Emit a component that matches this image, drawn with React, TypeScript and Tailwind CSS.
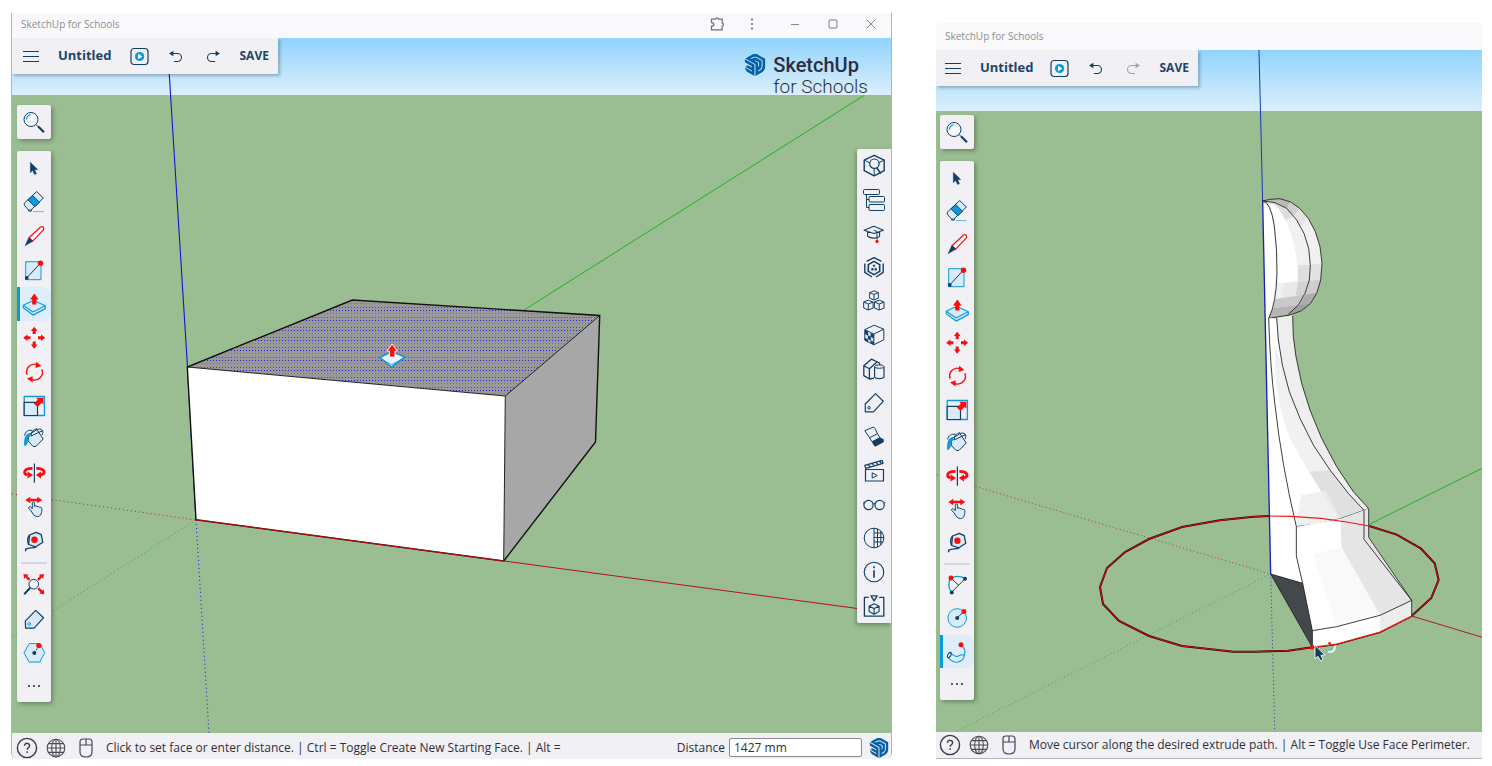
import type { ReactNode } from "react";
import clsx from "clsx";
import { SiSketchup } from "react-icons/si";

const NAVY = "#123f66";
const BLUE = "#0a9bdc";
const PALE = "#d9ebf9";
const RED = "#fb0d0d";

interface Tool {
    name: string;
    icon: ReactNode;
    active?: boolean;
}

function Icon({ children, size = 24 }: { children: ReactNode; size?: number }) {
    return (
        <svg
            width={size}
            height={size}
            viewBox="0 0 24 24"
            fill="none"
            stroke={NAVY}
            strokeWidth={1}
            strokeLinejoin="round"
            aria-hidden="true"
            className="shrink-0"
        >
            {children}
        </svg>
    );
}

/* ---------- drawing tools (left palette) ---------- */

const searchIcon = (
    <Icon>
        <circle cx="9" cy="9.5" r="7" fill="#f4f8fc" />
        <path d="M4.5 9.5a4.6 4.6 0 0 1 4.2-4.6" stroke={BLUE} strokeWidth={1.4} />
        <path d="M14 14.5l2 2" />
        <path d="M16 16.2l6 6" strokeWidth={2.2} />
    </Icon>
);

const selectIcon = (
    <Icon>
        <path d="M8.3 6.3v10.4l2.4-2.1 1.8 4 2-.9-1.8-3.9 3.1-.2z" fill={NAVY} strokeWidth={0.4} />
    </Icon>
);

const eraserIcon = (
    <Icon>
        <path d="M14.7 1.5l6.6 6.6L8.7 20.2h-2l-4.4-5v-2z" fill={PALE} />
        <path d="M10.7 5.5l6.8 6.8-4.6 4.4L6 9.8z" fill={BLUE} />
        <path d="M6 20.5q2 1.5 4 0" />
        <path d="M11 21.6h10.7" stroke="#63bbe6" />
    </Icon>
);

const pencilIcon = (
    <Icon>
        <path d="M18.6 3q1.8-1 3 .8v1.800L10.6 17.2 7 13.8z" fill="#fff" stroke={RED} strokeWidth={1.2} />
        <path d="M6.800 13.600l4 3.600L3 21.800z" fill={NAVY} strokeWidth={0.4} />
    </Icon>
);

const rectIcon = (
    <Icon>
        <path d="M3.7 3.7H19v18H3.7z" fill={PALE} stroke={BLUE} />
        <path d="M4.7 20L18.3 5.3" />
        <circle cx="4.7" cy="20" r="1.9" fill={NAVY} stroke="none" />
        <circle cx="18.5" cy="5.2" r="2.7" fill={RED} stroke="none" />
    </Icon>
);

const pushPullIcon = (
    <Icon>
        <path d="M1.3 13.3v2.4l9.7 7.4 12.3-6.5v-2.9L14 9.5H9z" fill={PALE} stroke={BLUE} strokeWidth={1.2} />
        <path d="M1.3 13.3L11 20l12.3-6.3" stroke={BLUE} strokeWidth={1.1} />
        <path d="M12.3 1.5l4.3 6h-2.2v5h-4.2v-5H8z" fill={RED} stroke="none" />
    </Icon>
);

const moveIcon = (
    <Icon>
        {[0, 90, 180, 270].map((a) => (
            <path
                key={a}
                d="M12.2.8l3.3 4.2h-1.8v3h-3V5H8.9z"
                fill={RED}
                stroke="none"
                transform={`rotate(${a} 12.2 11.8)`}
            />
        ))}
    </Icon>
);

const rotateIcon = (
    <Icon>
        <path d="M5.2 14.8A7.8 7.8 0 0 1 15 4.6M19.8 9.2A7.8 7.8 0 0 1 10 19.6" stroke={RED} strokeWidth={1.4} />
        <path d="M14.2 1.8l5.2 4.2-5.8 2zM10.6 16.2v6.4L5 18.6z" fill={RED} stroke="none" />
    </Icon>
);

const scaleIcon = (
    <Icon>
        <path d="M2.2 2.5h20.2v19H2.2z" stroke={BLUE} strokeWidth={1.3} />
        <path d="M2.2 8.3h13.3v13.2H2.2z" fill={PALE} strokeWidth={1.2} />
        <path d="M21.4 3.8v6.4l-2-1.3-3.8 4-3.8-3.4 4-3.8-1.6-1.9z" fill={RED} stroke="none" />
    </Icon>
);

const paintIcon = (
    <Icon>
        <path d="M7 7.5L15 2.600l6.200 9.400-7.200 7.400h-3L6 14z" fill={PALE} />
        <path d="M9 9l12-5.500M9.500 8.500c-.5-3.500 1.500-6 5.500-6.800M15 2.600c4-1.800 7.500 1 5 5.600" />
        <path d="M8.200 6C4 6.400 1.600 10 2.200 19c2.600-.2 3.400-2 3.600-4.800.2-2.300 1-4.200 3.200-5.400z" fill={BLUE} stroke="none" />
        <path d="M2.600 8.500C3.200 4.500 6.500 2.600 10.500 3.400" />
    </Icon>
);

const flipIcon = (
    <Icon>
        <path d="M10.5 7.3C5 7.2 2.5 9 2.6 11.2c0 1.5 1.2 2.4 3 2.8M14.3 7.3c5.5 0 8 1.8 7.8 3.9-.1 1.4-1.4 2.4-3.6 2.8" stroke={RED} strokeWidth={2.8} />
        <path d="M5.6 10.4l5.4 3.6-5.4 3.6zM19 10.4L13.8 14l5.2 3.6z" fill={RED} stroke="none" />
        <path d="M12.4 2.5v19.2" strokeWidth={1.2} />
    </Icon>
);

const handIcon = (
    <Icon>
        <path
            d="M9 15.8l-2.2-2.3c-.8-1.2.8-2.4 1.8-1.4l1.7 1.5V8.2c0-1.7 2.3-1.7 2.3 0v3.2c1-.9 2.2-.7 2.5.4 1-.7 2.1-.4 2.4.7 1.3-.6 2.4 0 2.4 1.6 0 3.2-.8 7.5-4.5 7.5-3 0-4.5-2.6-6.4-5.8z"
            fill={PALE}
        />
        <path d="M3.3 5l5-3.2v2h7v-2l5 3.2-5 3.200v-2h-7v2z" fill={RED} stroke="none" />
    </Icon>
);

const tapeIcon = (
    <Icon>
        <path d="M7.6 6l6.6-2.7 5 2.4 1.6 7.6-7 4.5-7.2-2.3z" fill={PALE} strokeWidth={1.3} />
        <path d="M14.2 17.8c-3 1.8-7 .4-10.4 2.3M3.6 19.8v2.400M6.6 15.4c-1.4-4-1-7.4 1-9.4" strokeWidth={1.4} />
        <circle cx="12.4" cy="10.8" r="3.2" fill={RED} stroke="none" />
    </Icon>
);

const extentsIcon = (
    <Icon>
        <circle cx="11.8" cy="11.2" r="4.8" fill="#f4f8fc" />
        <path d="M8.2 14.8l-6 6.4" strokeWidth={2} />
        <path d="M1.4 1l5.2.8-1.4 1.2L8.4 6 6.6 7.8 3.4 4.6 2.2 5.8zM22 1l-5.2.8L18 3l-3 3 1.8 1.8 3-3.2 1.4 1.2zM22.4 21.2l-5.2-.8 1.2-1.2-3-3 1.8-1.8 3 3.2 1.4-1.2z" fill={RED} stroke="none" />
    </Icon>
);

const tagIcon = (
    <Icon>
        <path d="M3.3 14.2L13.7 3.4l7.8 7.4L12 21.2H3.6z" fill={PALE} strokeWidth={1.2} />
        <circle cx="7.2" cy="17" r="1.4" stroke={BLUE} />
    </Icon>
);

const polygonIcon = (
    <Icon>
        <path d="M2 11.8l5.2-9.2h10.4l5.2 9.2-5.2 9.3H7.2z" fill={PALE} stroke={BLUE} />
        <path d="M12.3 12l4.5-7" strokeDasharray="2 1.4" />
        <circle cx="12.3" cy="12" r="2" fill={NAVY} stroke="none" />
        <circle cx="16.9" cy="4.6" r="2.7" fill={RED} stroke="none" />
    </Icon>
);

const moreIcon = (
    <Icon>
        <path d="M6 11h2v2H6zM11 11h2v2h-2zM16 11h2v2h-2z" fill={NAVY} fillOpacity={0.8} stroke="none" />
    </Icon>
);

const arcIcon = (
    <Icon>
        <path d="M6 5.2c4-2.4 9-2.6 14 .4M6 5.2C3 9 2.8 14.6 6.6 19.2" stroke={BLUE} strokeWidth={1.3} />
        <path d="M6.6 19.2L20 5.8M6 5.2l8 7.4" />
        <circle cx="6.8" cy="19.4" r="2" fill={NAVY} stroke="none" />
        <circle cx="20" cy="5.7" r="2" fill={NAVY} stroke="none" />
        <circle cx="6" cy="5" r="2.5" fill={RED} stroke="none" />
    </Icon>
);

const circleIcon = (
    <Icon>
        <circle cx="12.2" cy="12" r="9.3" fill={PALE} stroke={BLUE} />
        <path d="M12.2 12l6.8-6.7" />
        <circle cx="12.2" cy="12" r="2" fill={NAVY} stroke="none" />
        <circle cx="18.9" cy="5.4" r="2.5" fill={RED} stroke="none" />
    </Icon>
);

const followIcon = (
    <Icon>
        <path d="M17 6.5c3 1.6 3.4 5.4 2 9.2M5 13.8c1.8-1.6 2.6 3.2 7 2.6 2.8-.2 3-2.2 6.5-1.5 1.8 3-2.2 7.4-6.8 7.4-4 0-6.2-2.2-8.6-4.4" stroke={BLUE} strokeWidth={1.1} />
        <ellipse cx="4.4" cy="15" rx="1.5" ry="2.9" transform="rotate(28 4.4 15)" />
        <circle cx="16" cy="4.8" r="2.5" fill={RED} stroke="none" />
    </Icon>
);

const commonTools: Tool[] = [
    { name: "Select", icon: selectIcon },
    { name: "Eraser", icon: eraserIcon },
    { name: "Line", icon: pencilIcon },
    { name: "Rectangle", icon: rectIcon },
    { name: "Push/Pull", icon: pushPullIcon },
    { name: "Move", icon: moveIcon },
    { name: "Rotate", icon: rotateIcon },
    { name: "Scale", icon: scaleIcon },
    { name: "Paint", icon: paintIcon },
    { name: "Flip", icon: flipIcon },
    { name: "Drag", icon: handIcon },
    { name: "Tape Measure", icon: tapeIcon },
];

/* ---------- panels (right palette) ---------- */

const panelTools: Tool[] = [
    {
        name: "Entity Info",
        icon: (
            <Icon>
                <path d="M12.2 1.3l10 4.8v10.6l-10 5.2-10-5.2V6.1z" strokeWidth={1.4} />
                <path d="M2.2 6.1L8 9M16.4 9l5.8-2.9M12.2 15v7" />
                <circle cx="12.4" cy="9.7" r="4.7" fill="#f1f0f5" strokeWidth={1.2} />
                <path d="M14.8 13.8l4 5.8" strokeWidth={1.6} />
            </Icon>
        ),
    },
    {
        name: "Outliner",
        icon: (
            <Icon>
                <rect x="1.5" y="1.5" width="16" height="5" rx="1" />
                <rect x="7" y="8.5" width="15.500" height="5.500" rx="1" />
                <rect x="7" y="16.500" width="15.500" height="6" rx="1" />
                <path d="M4.5 6.7v12.800H7M4.500 11.500H7" />
            </Icon>
        ),
    },
    {
        name: "Instructor",
        icon: (
            <Icon>
                <path d="M2 8.2l10-3.9 9.4 3.9-9.4 3.2zM5.6 9.5v4.8c3 2.4 9.6 2.4 12 0V9.6" strokeWidth={1.1} />
                <path d="M12 8l3 1.6v8" />
                <circle cx="15" cy="19.4" r="1.6" fill={RED} stroke="none" />
            </Icon>
        ),
    },
    {
        name: "Components",
        icon: (
            <Icon>
                <path d="M12 5.400l5.700 3.200v6.800L12 18.600l-5.700-3.200V8.600z" strokeWidth={1.600} />
                <path d="M4.600 5.400L12 1.600l7.400 3.800M2.800 7.400v9L10 21M21.200 7.400v9L14 21" strokeWidth={1.400} />
                <path d="M12 8.600l1.200 1.200-1.200 1.200-1.200-1.200zM9.500 12.200h1.800v2H9.500zM12.800 12.200h1.800v2h-1.800z" fill={NAVY} strokeWidth={0.400} />
            </Icon>
        ),
    },
    {
        name: "3D Warehouse",
        icon: (
            <Icon>
                <path d="M12 1.8l4.4 1.9v5.4L12 11 7.6 9.1V3.7zM7.6 3.7L12 5.4l4.4-1.7M12 5.4V11" />
                <path d="M6.3 11.2l4.8 1.9v6L6.3 21l-4.6-2v-6zM1.7 13l4.6 2 4.8-1.9M6.3 15v6" />
                <path d="M17.2 11.2l4.8 1.9v6L17.2 21l-4.8-2v-6zM12.4 13l4.8 2 4.8-1.9M17.2 15v6" />
            </Icon>
        ),
    },
    {
        name: "Materials",
        icon: (
            <Icon>
                <path d="M12.2 2.2l9.6 4v10.6l-10 5-9-4.6V6.6zM2.8 6.6l9 4.4 10-4.8M11.8 11v10.8" />
                <path d="M3 7l3 1.5v4L3 11zM6 12.4l2.8 1.4v3.8L6 16zM8.8 10.2l3 1.4v3.6l-3-1.4zM3 15l3 1.4v2.6L3 17.4zM8.8 17.6l3 1.4v2.6l-3-1.4z" fill={NAVY} strokeWidth={0.3} />
            </Icon>
        ),
    },
    {
        name: "Styles",
        icon: (
            <Icon>
                <path d="M12 21.2l-4.6.8-5.6-3.4V8.8L9.4 2.2l8.2 3.8v2M1.8 8.8l5.6 3v10.2M7.4 11.8L15 5" strokeWidth={1.300} />
                <path d="M12.6 9.6v10.6c1.6 2 8 2 9.4 0V9.6" fill="#f1f0f5" strokeWidth={1.2} />
                <ellipse cx="17.3" cy="9.6" rx="4.7" ry="1.7" fill="#f1f0f5" />
            </Icon>
        ),
    },
    {
        name: "Tags",
        icon: (
            <Icon>
                <path d="M3.3 13L13.5 2.6l7.8 7.6L11.6 20.8H3.3z" strokeWidth={1.2} />
                <circle cx="7" cy="16.8" r="1.3" />
            </Icon>
        ),
    },
    {
        name: "Soften Edges",
        icon: (
            <Icon>
                <path d="M2.8 5.6l8.400-3.400q1.400 0 1.800 1.400l2.400 5-7.800 4.200zM7.600 12.800l2.400 4 8-4-2.600-4.200" />
                <path d="M10 16.800l8-4 3.400 1.600v2.600l-7.800 4.200q-1 0-1.400-.8z" fill={NAVY} strokeWidth={0.600} />
            </Icon>
        ),
    },
    {
        name: "Scenes",
        icon: (
            <Icon>
                <path d="M3.500 10.500h18V22h-18z" strokeWidth={1.200} />
                <path d="M2.8 6.4l17.4-5 .8 3-17.4 5zM6 5.4l2.2 2.6M10 4.3l2.2 2.6M14 3.2l2.2 2.6M17.6 2.1l2 2.6" strokeWidth={1.200} />
                <path d="M10.2 13.8v5.400l5-2.700z" />
            </Icon>
        ),
    },
    {
        name: "Display",
        icon: (
            <Icon>
                <circle cx="6.5" cy="12" r="4.6" strokeWidth={1.2} />
                <circle cx="17.6" cy="12" r="4.6" strokeWidth={1.2} />
                <path d="M11 11q1-1 2 0M2.2 10.2L1 9.6M22 10.2l1.2-.6" />
            </Icon>
        ),
    },
    {
        name: "Environment",
        icon: (
            <Icon>
                <circle cx="12" cy="12" r="9.8" />
                <path d="M12 2.200v19.600M15.500 3v18M18.800 5.200v13.600M12 7h8.400M12 11.500h9.800M12 16h8.800" />
            </Icon>
        ),
    },
    {
        name: "Model Info",
        icon: (
            <Icon>
                <circle cx="12" cy="12" r="9.8" strokeWidth={1.1} />
                <path d="M12 10.2v7.6M12 6.2v2" strokeWidth={1.6} />
            </Icon>
        ),
    },
    {
        name: "Downloads",
        icon: (
            <Icon>
                <path d="M6.8 3.400H2.400v18.800h19.400V3.400h-4.600" strokeWidth={1.300} />
                <path d="M9 1.800h6.200l-3.100 5z" strokeWidth={1.300} />
                <path d="M12.1 9.8l5 2.4v5.4l-5 2.6-5-2.6v-5.4zM7.1 12.2l5 2.4 5-2.4M12.1 14.6v5.6" strokeWidth={1.1} />
            </Icon>
        ),
    },
];

/* ---------- toolbars ---------- */

function ToolButton({ tool, className = "flex-1" }: { tool: Tool; className?: string }) {
    return (
        <button
            type="button"
            aria-label={tool.name}
            aria-pressed={tool.active}
            className={clsx(
                "flex w-full items-center justify-center",
                className,
                tool.active && "rounded-r-lg bg-[#ddeefa] shadow-[inset_3px_0_0_#0a9bdc]",
            )}
        >
            {tool.icon}
        </button>
    );
}

function ToolPalette({ active, extra, className }: { active: string; extra: Tool[]; className: string }) {
    const mark = (t: Tool) => ({ ...t, active: t.name === active });

    return (
        <div className="flex w-[34px] flex-col gap-3">
            <button
                type="button"
                aria-label="Search"
                className="flex h-[34px] items-center justify-center rounded-xs bg-[#f1f0f5] shadow-[2px_2px_4px_rgba(0,0,0,0.3)]"
            >
                {searchIcon}
            </button>
            <div className={clsx("flex flex-col rounded-xs bg-[#f1f0f5] shadow-[2px_2px_4px_rgba(0,0,0,0.3)]", className)}>
                {commonTools.map(mark).map((t) => (
                    <ToolButton key={t.name} tool={t} />
                ))}
                <hr className="mx-1 my-1 border-t-2 border-[#d6d6de]" />
                {extra.map(mark).map((t) => (
                    <ToolButton key={t.name} tool={t} />
                ))}
                <ToolButton tool={{ name: "More tools", icon: moreIcon }} className="h-8" />
            </div>
        </div>
    );
}

function MenuBar({ canRedo, compact = false }: { canRedo: boolean; compact?: boolean }) {
    return (
        <div
            className={clsx(
                "flex h-9 items-center bg-[#f1f0f5] pr-[9px] text-xs font-bold text-[#1c4568] shadow-[2px_2px_3px_rgba(0,0,0,0.25)]",
                compact ? "pl-[9px]" : "pl-[11px]",
            )}
        >
            <button type="button" aria-label="Menu">
                <svg width="16" height="12" viewBox="0 0 16 12" stroke={NAVY} strokeWidth="1">
                    <path d="M0 1.5h16M0 6.500h16M0 11.500h16" />
                </svg>
            </button>
            <button type="button" className="ml-[19px] text-[13px]">
                Untitled
            </button>
            <button type="button" aria-label="Present" className={compact ? "ml-4" : "ml-[18px]"}>
                <svg width="19" height="19" viewBox="0 0 19 19" fill="none">
                    <rect x="1" y="1.5" width="17" height="16" rx="3" stroke={NAVY} strokeWidth="1.2" />
                    <circle cx="9.6" cy="9.5" r="4.600" fill={BLUE} />
                    <path d="M8 6.800v5.400l4.400-2.700z" fill="#fff" />
                </svg>
            </button>
            <button type="button" aria-label="Undo" className="ml-5">
                <svg width="14" height="14" viewBox="0 0 14 14" fill="none">
                    <path d="M3 4.500h5.500a4 4 0 0 1 0 8H5" stroke={NAVY} strokeWidth="1.1" />
                    <path d="M0 4.500l4.400-2.700v5.400z" fill={NAVY} />
                </svg>
            </button>
            <button type="button" aria-label="Redo" disabled={!canRedo} className={clsx("ml-[23px]", !canRedo && "opacity-40")}>
                <svg width="14" height="14" viewBox="0 0 14 14" fill="none">
                    <path d="M11 4.500H5.500a4 4 0 0 0 0 8H9" stroke={NAVY} strokeWidth="1.1" />
                    <path d="M14 4.500L9.600 1.800v5.400z" fill={NAVY} />
                </svg>
            </button>
            <button type="button" className="ml-5">
                SAVE
            </button>
        </div>
    );
}

function Brand() {
    return (
        <div className="mt-4 mr-[23px] flex items-start gap-[7px] text-[#2e2d40]">
            <SiSketchup size={22} color="#0660a4" />
            <p className="font-[Roboto,sans-serif] leading-[22px]">
                <span className="block text-xl leading-[22px] font-medium">SketchUp</span>
                <span className="block text-[19px] font-light">for Schools</span>
            </p>
        </div>
    );
}

function WindowControls() {
    const button = "flex h-full items-center justify-center";
    return (
        <div className="flex h-full items-center pr-px">
            <button type="button" aria-label="Extensions" className={clsx(button, "w-[34px]")}>
                <svg width="16" height="16" viewBox="0 0 16 16" fill="none" stroke="#6f6f78" strokeWidth="1.2">
                    <path d="M1.5 3.2h4.2a1.4 1.4 0 0 1 2.8 0h3.7v4a1.3 1.3 0 0 1 0 2.6v4H1.5v-3.6q2.4-.2 2.4-1.8T1.5 6.6z" />
                </svg>
            </button>
            <button type="button" aria-label="More" className={clsx(button, "w-[34px]")}>
                <svg width="4" height="12" viewBox="0 0 4 12" fill="#6f6f78">
                    <circle cx="2" cy="1.5" r="1.1" />
                    <circle cx="2" cy="6" r="1.1" />
                    <circle cx="2" cy="10.5" r="1.1" />
                </svg>
            </button>
            <button type="button" aria-label="Minimize" className={clsx(button, "ml-[7px] w-[38px]")}>
                <svg width="10" height="10" viewBox="0 0 10 10" stroke="#85858c">
                    <path d="M1 5.5h8" />
                </svg>
            </button>
            <button type="button" aria-label="Maximize" className={clsx(button, "w-[38px]")}>
                <svg width="10" height="10" viewBox="0 0 10 10" fill="none" stroke="#77777e">
                    <rect x="1" y="1" width="8" height="8" rx="1" />
                </svg>
            </button>
            <button type="button" aria-label="Close" className={clsx(button, "w-[38px]")}>
                <svg width="10" height="10" viewBox="0 0 10 10" stroke="#85858c">
                    <path d="M.5.5l9 9M9.5.5l-9 9" />
                </svg>
            </button>
        </div>
    );
}

function StatusBar({ children, className }: { children: ReactNode; className: string }) {
    return (
        <footer className={clsx("flex h-[26px] items-center bg-[#f1f0f5] text-xs text-[#2f2f38]", className)}>
            <button type="button" aria-label="Help">
                <svg width="22" height="22" viewBox="0 0 22 22" fill="none" stroke="#3a3a42" strokeWidth="1.4">
                    <circle cx="11" cy="11" r="9.6" />
                    <path d="M8.4 8.8c0-3.4 5.2-3.2 5.2 0 0 2-2.5 1.9-2.5 4M11.1 14.3v1.7" />
                </svg>
            </button>
            <button type="button" aria-label="Language" className="ml-2">
                <svg width="20" height="20" viewBox="0 0 20 20" fill="none" stroke="#4b4b53" strokeWidth="1.1">
                    <circle cx="10" cy="10" r="8.8" />
                    <ellipse cx="10" cy="10" rx="4.3" ry="8.8" />
                    <path d="M10 1.2v17.6M1.2 10h17.6M2.6 5.6h14.8M2.6 14.4h14.8" />
                </svg>
            </button>
            <svg width="14" height="20" viewBox="0 0 14 20" fill="none" stroke="#45455c" strokeWidth="1.2" className="mx-[13px] shrink-0">
                <path d="M1 4q0-3 3-3h6q3 0 3 3v10q0 5-6 5t-6-5zM1 7h12M7 1v6" />
            </svg>
            {children}
        </footer>
    );
}

/* ---------- modelling scenes ---------- */

function BoxScene() {
    return (
        <svg viewBox="12 38 879 695" preserveAspectRatio="xMidYMid slice" className="absolute inset-0 h-full w-full" fill="none">
            <defs>
                <linearGradient id="sky-box" x1="0" y1="0" x2="0" y2="1">
                    <stop offset="0" stopColor="#90d3fd" />
                    <stop offset="1" stopColor="#dcf0fc" />
                </linearGradient>
                <pattern id="face-dots" width="3" height="10" patternUnits="userSpaceOnUse">
                    <path d="M0 0h1v1H0z" fill="#2020e8" />
                    <path d="M0 3h1v1H0z" fill="#7272c4" />
                    <path d="M0 7h1v1H0z" fill="#4040dc" />
                </pattern>
            </defs>
            <rect x="12" y="38" width="879" height="57" fill="url(#sky-box)" />
            {/* axes */}
            <path d="M167 38l20.5 329L196 520" stroke="#1414c8" strokeWidth={1.1} />
            <path d="M524 310L864 95.5" stroke="#1fb41f" />
            <path d="M504 561l387 52" stroke="#b81414" />
            <path d="M12 494l184 26" stroke="#b02626" strokeDasharray="1 3" />
            <path d="M196 520L12 637" stroke="#1fae1f" strokeDasharray="1 3" />
            <path d="M196 520l13 213" stroke="#1a1ab8" strokeDasharray="1 3" />
            {/* box */}
            <path d="M187.3 367L352.3 300l247.4 15.500L505.3 396z" fill="#999" />
            <path d="M187.3 367L352.3 300l247.4 15.500L505.3 396z" fill="url(#face-dots)" shapeRendering="crispEdges" />
            <path d="M599.7 315.5L595.5 442 503.7 561l1.6-165z" fill="#a7a7a7" />
            <path d="M187.3 367l318 29-1.600 165L196 519.7z" fill="#fff" />
            <path d="M187.3 367l318 29 94.4-80.500M505.3 396l-1.600 165" stroke="#222" />
            <path d="M196 519.7L187.3 367 352.3 300l247.4 15.500L595.5 442 503.7 561" stroke="#111" strokeWidth={1.4} />
            <path d="M196 519.7L503.7 561" stroke="#400" strokeWidth={1.6} />
            <path d="M196 519.7L503.7 561" stroke="#d01414" strokeWidth={0.8} />
            {/* push/pull cursor */}
            <path d="M380 357.5l11.5-6 13.5 5.500-13.500 10z" fill="#e8f4fc" stroke="#1698cf" strokeWidth={1.600} strokeLinejoin="round" />
            <path d="M381 359l10.500 5.600L404 358.500" stroke="#1698cf" strokeWidth={0.800} />
            <path d="M392.2 344l5 7H395v6h-5.600v-6H387z" fill={RED} stroke="#fff" strokeWidth={0.900} />
        </svg>
    );
}

const sweepPath =
    "M448 1038l82 26 72 41 42 45 12 50-22 54-59 54-95 48-130 36-73 10-72 10-105 3H40l-154-17-99-30-90-45-48-51-9-51 21-57 54-48 72-39 99-36L0 1021l100-11 50-2";

function PawnScene() {
    return (
        <svg viewBox="936 50 546 682" preserveAspectRatio="xMidYMid slice" className="absolute inset-0 h-full w-full" fill="none">
            <defs>
                <linearGradient id="sky-pawn" x1="0" y1="0" x2="0" y2="1">
                    <stop offset="0" stopColor="#90d3fd" />
                    <stop offset="1" stopColor="#dcf0fc" />
                </linearGradient>
            </defs>
            <rect x="936" y="50" width="546" height="61" fill="url(#sky-pawn)" />
            <g transform="translate(1220 180) scale(.33333)" strokeWidth={2.6}>
                {/* axes */}
                <path d="M117-390L128 66" stroke="#1a3ab0" strokeWidth={3} />
                <path d="M446 1034L800 858" stroke="#1fb41f" strokeWidth={3} />
                <path d="M575 1308l225 68" stroke="#b01818" strokeWidth={3} />
                <path d="M-860 882l1012 300" stroke="#b02626" strokeDasharray="3 8" />
                <path d="M-860 1688l1012-506" stroke="#1fae1f" strokeDasharray="3 8" />
                <path d="M152 1182l13 500" stroke="#1a1ab8" strokeDasharray="3 8" />
                {/* sweep path */}
                <path d={sweepPath} stroke="#300" strokeWidth={6} />
                <path d={sweepPath} stroke="#d01212" strokeWidth={3} />
                {/* profile face */}
                <path
                    d="M128 66q30 14 38 92 6 60 5 122-2 86-25 135 2 165 22 290 20 140 61 335v88l19 82-96-28z"
                    fill="#fff"
                />
                {/* head */}
                <path
                    d="M128 63l22-5 30-2 32 10 26 18 27 31 21 40 14 45 6 50-4 50-12 40-18 30-27 22-35 13-64 10c24-60 27-240 8-310q-9-32-26-42z"
                    fill="#f1f1f1"
                />
                <path d="M128 63l22-5 30-2 32 10-12 19-35-17z" fill="#b9b9b9" />
                <path d="M212 66l26 18-16 24-22-23z" fill="#cfcfcf" />
                <path d="M238 84l27 31-22 24-21-31z" fill="#e3e3e3" />
                <path d="M165 68l35 17 22 23-28 14q-20-42-48-54z" fill="#dedede" />
                <path d="M146 68q28 4 52 56 38 90 36 180l-62 6q4-180-26-242z" fill="#fff" />
                <path d="M234 255l37 0-3 48-34 4z" fill="#dedede" />
                <path d="M271 255l35-6-4 49-34 5z" fill="#e2e2e2" />
                <path d="M192 310l42-6-8 44-42 7z" fill="#e9e9e9" />
                <path d="M234 306l34-3-13 40-29 5z" fill="#d2d2d2" />
                <path d="M268 303l34-5-12 42-35 5z" fill="#cdcdcd" />
                <path d="M166 357l60-9 29-5-20 32-76 13z" fill="#c9c9c9" />
                <path d="M255 344l35-6-18 32-37 8z" fill="#adadad" />
                <path d="M159 386l76-10 37-6-27 22-35 13-64 10z" fill="#9f9f9f" />
                <path d="M159 386l76-10-30 27-59 12z" fill="#b5b5b5" />
                <path
                    d="M128 63l22-5 30-2 32 10 26 18 27 31 21 40 14 45 6 50-4 50-12 40-18 30-27 22-35 13-64 10M128 63l37 5 35 17 30 35 22 40 14 45 5 50-3 45-13 40-20 35-30 28M128 63q24 2 35 75 9 70 8 142-2 90-25 135"
                    stroke="#222"
                />
                {/* neck */}
                <path
                    d="M170 413l5 67 12 75 21 80 32 80 40 80 50 75 55 70 47 51 14-5-46-51-50-75-45-85-35-85-25-80-17-80-8-60-2-64z"
                    fill="#eee"
                />
                <path
                    d="M146 415h24l5 65 12 75 21 80 32 80 40 80 50 75 55 70 47 51-70 27-72 16-61 8q-33-130-44-220-39-200-39-405z"
                    fill="#fff"
                />
                <path d="M165 500l22 60 21 75 32 80 40 80 50 75 55 70 47 51-70 26q-90-120-150-240-50-110-47-277z" fill="#f1f1f1" />
                <path d="M270 875l60-5 55 70 47 51-70 25q-50-60-92-141z" fill="#e0e0e0" />
                <path d="M245 945l72-13 45 84-133 24 0-20z" fill="#ececec" opacity=".8" />
                <path
                    d="M146 415q4 140 19 260 20 180 64 365l61-8 72-16 84-30M218 408l2 62 8 60 17 80 25 80 35 85 45 85 50 75 46 51M170 413l5 67 12 75 21 80 32 80 40 80 50 75 55 70 47 51"
                    stroke="#222"
                />
                {/* base */}
                <path d="M229 1040l133-24 84-30v86l129 189v47l-95 48-130 36-73 10v-50l-48-224z" fill="#fff" />
                <path d="M362 1018l84-32v86l129 189-95 45-116-204z" fill="#e5e5e5" />
                <path d="M280 1122l84-20 116 204-130 34z" fill="#f9f9f9" />
                <path d="M480 1306l95-45v47l-95 48z" fill="#ececec" />
                <path d="M152 1182l96 28 29 142v50z" fill="#42484b" />
                <path
                    d="M229 1040v88l19 82 29 142v50L152 1182l96 28M277 1352l73-12 130-34 95-45v47M575 1261l-143-183v-87M446 986v86l129 189"
                    stroke="#222"
                />
                <path d="M128 66l24 1116" stroke="#1c1cc0" strokeWidth={4} />
                <path d="M150 1008l63 1 90 6 77 11 68 12M277 1402l73-10 130-36 95-48" stroke="#f01818" strokeWidth={3.500} />
                {/* cursor */}
                <rect x="270" y="1396" width="12" height="12" fill={RED} />
                <path d="M285 1396v40l9-7 8 14 7-4-6-13 12-1z" fill={NAVY} stroke="#fff" />
                <path d="M324 1414q20 6 20-16" stroke="#e4f2f8" strokeWidth={8} />
                <path d="M324 1410q16 4 17-14" stroke="#4fa8c8" />
                <circle cx="329" cy="1390" r="4" fill={RED} />
            </g>
        </svg>
    );
}

export default function App() {
    return (
        <div className="flex min-h-screen gap-11 bg-white pt-[13px] pr-[10px] pb-[7px] pl-[11px] font-['Open_Sans','Noto_Sans',sans-serif]">
            <section className="flex flex-[879_1_0%] flex-col overflow-hidden rounded-b-md border-x border-[#b4b4b8]">
                <header className="flex h-[25px] items-center justify-between bg-[#f9f9fb] pb-[3px] pl-[9px] text-[10px] text-[#8f8f8f]">
                    <h1>SketchUp for Schools</h1>
                    <WindowControls />
                </header>
                <main className="relative flex-1 overflow-hidden bg-[#9bbd92]">
                    <BoxScene />
                    <div className="relative flex h-[67px] items-start justify-between">
                        <MenuBar canRedo />
                        <Brand />
                    </div>
                    <div className="relative flex items-start justify-between pb-7 pl-[5px]">
                        <ToolPalette
                            active="Push/Pull"
                            className="h-[551px]"
                            extra={[
                                { name: "Zoom Extents", icon: extentsIcon },
                                { name: "Tag", icon: tagIcon },
                                { name: "Polygon", icon: polygonIcon },
                            ]}
                        />
                        <div className="mt-11 flex h-[474px] w-[34px] flex-col rounded-l-xs bg-[#f1f0f5] shadow-[-1px_2px_4px_rgba(0,0,0,0.3)]">
                            {panelTools.map((t) => (
                                <ToolButton key={t.name} tool={t} />
                            ))}
                        </div>
                    </div>
                </main>
                <StatusBar className="pt-[3px] pr-[2px] pl-1">
                    <p className="whitespace-nowrap">
                        Click to set face or enter distance. | Ctrl = Toggle Create New Starting Face. | Alt =
                    </p>
                    <label htmlFor="distance" className="ml-auto">
                        Distance
                    </label>
                    <input
                        id="distance"
                        type="text"
                        defaultValue="1427 mm"
                        className="mr-[7px] ml-1 h-[19px] w-[133px] rounded-xs border border-[#8a8a90] bg-white px-1"
                    />
                    <SiSketchup size={20} color="#0660a4" />
                </StatusBar>
            </section>

            <section className="mt-[10px] flex flex-[546_1_0%] flex-col overflow-hidden rounded-tl-sm border-b border-[#b4b4b8]">
                <header className="flex h-[27px] items-center bg-[#f9f9fb] pl-[9px] text-[10px] text-[#8f8f8f]">
                    <h1>SketchUp for Schools</h1>
                </header>
                <main className="relative flex-1 overflow-hidden bg-[#9bbd92]">
                    <PawnScene />
                    <div className="relative flex h-[65px] items-start">
                        <MenuBar canRedo={false} compact />
                    </div>
                    <div className="relative pb-7 pl-1">
                        <ToolPalette
                            active="Follow Me"
                            className="h-[539px]"
                            extra={[
                                { name: "Arc", icon: arcIcon },
                                { name: "Circle", icon: circleIcon },
                                { name: "Follow Me", icon: followIcon },
                            ]}
                        />
                    </div>
                </main>
                <StatusBar className="pl-[3px]">
                    <p className="whitespace-nowrap">
                        Move cursor along the desired extrude path. | Alt = Toggle Use Face Perimeter.
                    </p>
                </StatusBar>
            </section>
        </div>
    );
}
